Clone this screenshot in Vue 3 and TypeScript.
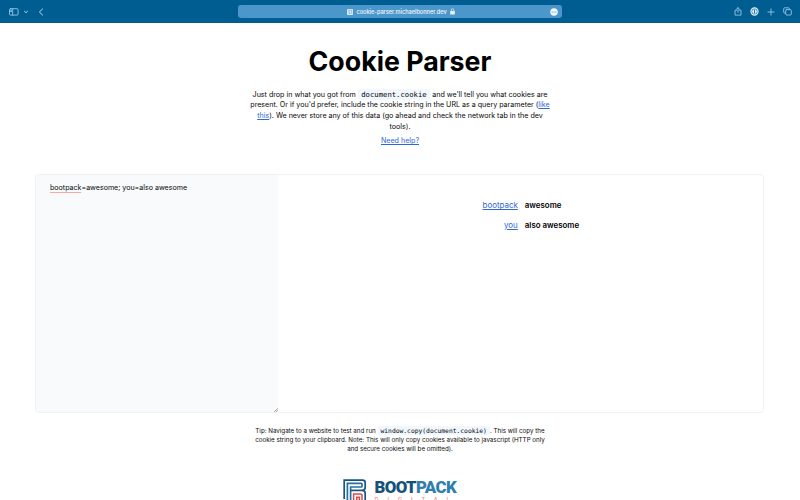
<script setup lang="ts">
interface Cookie {
  name: string
  value: string
}

const cookies: Cookie[] = [
  { name: 'bootpack', value: 'awesome' },
  { name: 'you', value: 'also awesome' },
]
</script>

<template>
  <div class="window">
    <header class="toolbar">
      <div class="tools left">
        <svg class="sidebar" width="10" height="8" viewBox="0 0 10 8">
          <rect x=".5" y=".7" width="8.6" height="6.4" rx="1" />
          <path d="M3.7 .7v6.4M1.5 2.2h1.1M1.5 3.5h1.1" />
        </svg>
        <svg class="chevron" width="4" height="4" viewBox="0 0 4 4"><path d="M.5 1.3 2 2.7 3.5 1.3" /></svg>
        <svg class="back" width="6" height="8" viewBox="0 0 6 8"><path d="M4.6 .9 1.4 4l3.2 3.1" /></svg>
      </div>
      <div class="address">
        <svg width="6" height="6" viewBox="0 0 6 6" class="favicon">
          <rect width="6" height="6" rx=".7" fill="#d9e9f5" />
          <path d="M1 1.3h2.5l1.2 1v2.4M1.2 3h1.2v1.7h1.2M4 1.1h1" stroke="#438fc5" stroke-width=".5" fill="none" />
        </svg>
        <span class="domain">cookie-parser.michaelbonner.dev</span>
        <svg width="5" height="7" viewBox="0 0 5 7" class="lock">
          <rect x=".2" y="3" width="4.6" height="3.5" rx=".6" fill="#e9f4fb" />
          <path d="M1.2 3V2a1.3 1.3 0 0 1 2.6 0v1" stroke="#e9f4fb" stroke-width=".7" fill="none" />
        </svg>
        <svg width="8" height="8" viewBox="0 0 8 8" class="more">
          <circle cx="4" cy="4" r="3.8" fill="#f1f8fd" />
          <g fill="#4b96ca"><circle cx="2.2" cy="4" r=".6" /><circle cx="4" cy="4" r=".6" /><circle cx="5.8" cy="4" r=".6" /></g>
        </svg>
      </div>
      <div class="tools right">
        <svg width="8" height="9" viewBox="0 0 8 9"><path d="M2.6 3.2H1v4.9h6V3.2H5.4M4 5.4V.8M2.5 2.1 4 .7l1.5 1.4" /></svg>
        <svg width="9" height="9" viewBox="0 0 9 9">
          <circle class="ring" cx="4.5" cy="4.5" r="3.6" />
          <circle class="core" cx="4.5" cy="4.5" r="2.3" />
          <path class="slot" d="M4.5 3.1v2.8" />
        </svg>
        <svg width="8" height="8" viewBox="0 0 8 8"><path d="M4 .9v6.2M.9 4h6.2" /></svg>
        <svg width="9" height="9" viewBox="0 0 9 9">
          <rect x="2.7" y="2.6" width="5.6" height="5.4" rx="1" />
          <path d="M2.7 6.1h-1a1 1 0 0 1-1-1V1.8a1 1 0 0 1 1-1h3.6a1 1 0 0 1 1 1v.8" />
        </svg>
      </div>
    </header>

    <main>
      <h1>Cookie Parser</h1>
      <p class="intro">
        <span class="line">Just drop in what you got from <code>document.cookie</code> and we'll tell you what cookies are</span>
        <span class="line">present. Or if you'd prefer, include the cookie string in the URL as a query parameter (<a>like</a></span>
        <span class="line"><a>this</a>). We never store any of this data (go ahead and check the network tab in the dev</span>
        <span class="line">tools).</span>
      </p>
      <p class="help"><a>Need help?</a></p>

      <section class="panel">
        <div class="input">
          <span class="misspelled">bootpack</span>=awesome; you=also awesome
          <svg class="grip" width="4" height="4" viewBox="0 0 4 4"><path d="M.3 3.8 3.8 .3M2.2 3.8 3.8 2.2" /></svg>
        </div>
        <dl class="results">
          <div v-for="c in cookies" :key="c.name" class="row">
            <dt><a>{{ c.name }}</a></dt>
            <dd>{{ c.value }}</dd>
          </div>
        </dl>
      </section>

      <p class="tip">
        <span class="line">Tip: Navigate to a website to test and run <code>window.copy(document.cookie)</code>. This will copy the</span>
        <span class="line">cookie string to your clipboard. Note: This will only copy cookies available to javascript (HTTP only</span>
        <span class="line">and secure cookies will be omitted).</span>
      </p>

      <footer class="brand">
        <svg width="24" height="28" viewBox="0 0 24 28" fill="none">
          <g stroke="#15557f" stroke-width="1.7">
            <path d="M1.2 20V1.1H19.5Q22.2 1.1 22.2 3.7V8.3Q22.2 10.7 20 11.4Q22.2 12 22.2 14.5V26" />
            <path d="M4.4 26V4.4H18.2Q19 4.4 19 5.2V7.2Q19 8 18.2 8H7.6V26" stroke="#26719f" />
            <path d="M7.6 11.4H20" />
          </g>
          <path d="M10.6 26V14.9H17.8Q19 14.9 19 16V26M13.8 26V18.2H16.4V26" stroke="#dc4a4d" stroke-width="1.5" />
        </svg>
        <div class="words">
          <div class="name"><b>BOOT</b><b class="pack">PACK</b></div>
          <div class="sub">DIGITAL</div>
        </div>
      </footer>
    </main>
  </div>
</template>

<style>
body { background: #fff; }
</style>

<style scoped>
* { box-sizing: border-box; }
.window { width: 800px; height: 500px; overflow: hidden; background: #fff; color: #080808; font-family: Inter, sans-serif; }
.toolbar { height: 23px; background: #005d91; display: flex; align-items: center; justify-content: space-between; padding: 0 8px 0 9px; }
.tools { display: flex; align-items: center; }
.tools svg { fill: none; stroke: #91c7e8; stroke-width: .9; stroke-linecap: round; stroke-linejoin: round; }
.tools .ring { fill: #3484b9; stroke: #e4f3fc; stroke-width: 1.1; }
.tools .core { fill: #d7edfb; stroke: none; }
.tools .slot { stroke: #146ca4; }
.left { width: 229px; }
.chevron { margin-left: 5px; }
.back { margin-left: 10px; }
.left .back, .left .chevron { stroke: #b3dcf4; stroke-width: 1; }
.right { width: 58px; justify-content: space-between; }
.address { width: 324px; height: 13px; margin-right: 172px; border-radius: 3px; background: #4b96ca; display: flex; align-items: center; padding: 0 4px 0 109px; }
.domain { color: #f4faff; font-size: 5.6px; font-weight: 500; line-height: 11px; padding-top: 2px; margin: 0 3px 0 3.5px; white-space: nowrap; }
.more { margin-left: auto; }
main { display: flex; flex-direction: column; align-items: center; }
h1 { margin: 23px 0 0; font-size: 26.75px; line-height: 31px; font-weight: 700; color: #000; }
p { margin: 0; text-align: center; }
.line { display: block; white-space: nowrap; }
.intro { margin-top: 12.5px; font-size: 7.11px; line-height: 10.67px; }
a { color: #2f68d8; text-decoration: underline; text-decoration-thickness: .6px; text-underline-offset: .8px; }
code { font-family: "DejaVu Sans Mono", monospace; background: #f0f7fe; border-radius: 2px; }
.intro code { font-size: 7.25px; padding: 1px 3.5px; }
.help { margin-top: 3px; font-size: 7.11px; line-height: 11px; }
.panel { width: 729px; height: 239px; margin: 28px 1px 0 0; border: 1px solid #eff1f3; border-radius: 4px; display: flex; overflow: hidden; }
.input { flex: none; width: 242px; position: relative; background: #f8fafc; padding: 7.5px 14px; font-size: 7.08px; line-height: 10.67px; white-space: nowrap; }
.misspelled { border-bottom: 1px solid #f7a9a6; }
.grip { position: absolute; right: 0; bottom: 0; stroke: #777; stroke-width: .7; }
.results { flex: 1; margin: 0; padding-top: 20.5px; font-size: 7.95px; }
.row { display: grid; grid-template-columns: 239.8px 1fr; column-gap: 7px; height: 19.6px; align-items: center; }
dt { text-align: right; }
dd { margin: 0; font-weight: 600; color: #000; font-size: 7.9px; }
.tip { margin-top: 14px; font-size: 6.22px; line-height: 8.89px; }
.tip code { font-size: 6.32px; padding: 1px 3px; }
.brand { margin-top: 25.4px; display: flex; align-items: flex-start; width: 114px; gap: 7.5px; }
.words { width: 82px; }
.name { font-family: Roboto, sans-serif; font-size: 16.8px; line-height: 17px; letter-spacing: -.6px; color: #14517b; white-space: nowrap; }
.name b { font-weight: 900; }
.name .pack { color: #2f7fae; }
.sub { font-size: 5.5px; line-height: 8px; letter-spacing: 9px; font-weight: 500; color: #e88a8b; white-space: nowrap; }
</style>
